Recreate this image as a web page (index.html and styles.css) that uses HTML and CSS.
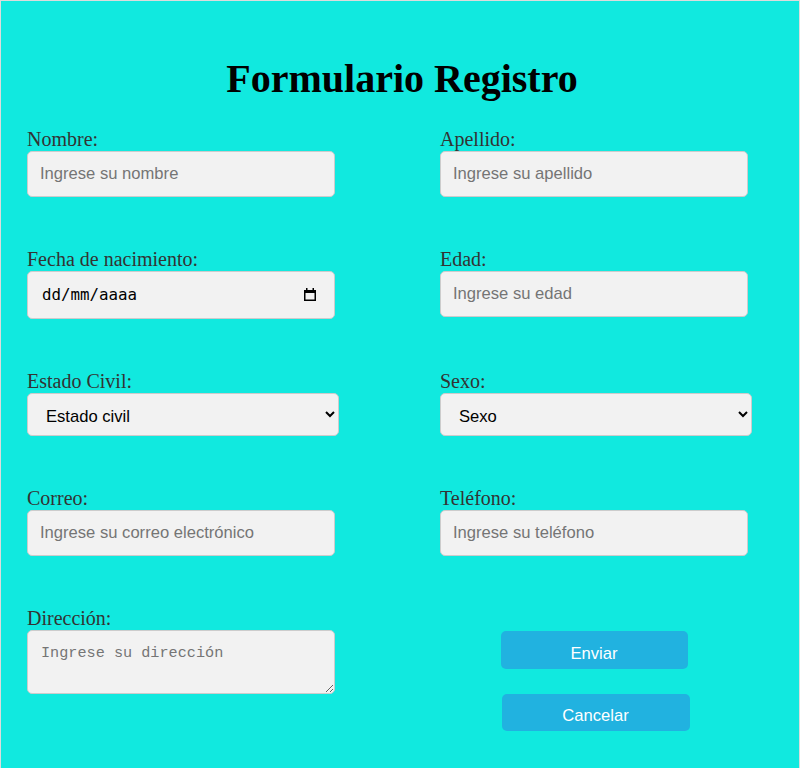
FILE: index.html
```html
<!DOCTYPE html>
<html lang="es">
<head>
<meta charset="utf-8">
<title>Formulario Registro</title>
<link rel="stylesheet" href="styles.css">
</head>
<body>
<div class="page">
  <h1 class="title">Formulario Registro</h1>
  <form class="form">
    <div class="field">
      <label class="label" for="nombre">Nombre:</label>
      <input class="control" id="nombre" type="text" placeholder="Ingrese su nombre">
    </div>
    <div class="field">
      <label class="label" for="apellido">Apellido:</label>
      <input class="control" id="apellido" type="text" placeholder="Ingrese su apellido">
    </div>
    <div class="field">
      <label class="label">Fecha de nacimiento:</label>
      <div class="control date-field">
        <span class="date-text">dd/mm/aaaa</span>
        <svg class="cal-icon" width="14" height="15" viewBox="0 0 14 15" aria-hidden="true">
          <rect x="1.75" y="3.75" width="10.5" height="9.5" fill="none" stroke="#000" stroke-width="1.5"/>
          <rect x="1" y="3" width="12" height="3" fill="#000"/>
          <rect x="3" y="1" width="1.5" height="3" fill="#000"/>
          <rect x="9.5" y="1" width="1.5" height="3" fill="#000"/>
        </svg>
      </div>
    </div>
    <div class="field">
      <label class="label" for="edad">Edad:</label>
      <input class="control" id="edad" type="text" placeholder="Ingrese su edad">
    </div>
    <div class="field">
      <label class="label" for="civil">Estado Civil:</label>
      <select class="select" id="civil">
        <option>Estado civil</option>
      </select>
    </div>
    <div class="field">
      <label class="label" for="sexo">Sexo:</label>
      <select class="select" id="sexo">
        <option>Sexo</option>
      </select>
    </div>
    <div class="field">
      <label class="label" for="correo">Correo:</label>
      <input class="control" id="correo" type="text" placeholder="Ingrese su correo electrónico">
    </div>
    <div class="field">
      <label class="label" for="telefono">Teléfono:</label>
      <input class="control" id="telefono" type="text" placeholder="Ingrese su teléfono">
    </div>
    <div class="field">
      <label class="label" for="direccion">Dirección:</label>
      <textarea class="textarea" id="direccion" placeholder="Ingrese su dirección"></textarea>
    </div>
    <div class="actions">
      <button class="btn btn-send" type="button">Enviar</button>
      <button class="btn btn-cancel" type="button">Cancelar</button>
    </div>
  </form>
</div>
</body>
</html>
```

FILE: styles.css
```css
html, body {
  margin: 0;
  padding: 0;
}

body {
  background: #11e9df;
  font-family: "Liberation Serif", "Times New Roman", serif;
}

.page {
  box-sizing: border-box;
  min-height: 800px;
  background: #11e9df;
  border: 1px solid #dcdcdc;
  border-bottom: none;
  padding: 55px 22px 0 26px;
}

.title {
  margin: 0;
  font-family: "Liberation Serif", "Times New Roman", serif;
  font-size: 40px;
  font-weight: bold;
  line-height: 46px;
  text-align: center;
  color: #000;
}

.form {
  margin-top: 25px;
  display: grid;
  grid-template-columns: 413px 1fr;
  row-gap: 50px;
  align-items: start;
}

.field {
  display: flex;
  flex-direction: column;
  align-items: flex-start;
}

.label {
  display: block;
  font-family: "Liberation Serif", "Times New Roman", serif;
  font-size: 20px;
  line-height: 24px;
  color: #333;
}

.control {
  box-sizing: border-box;
  width: 308px;
  height: 46px;
  margin: 0;
  padding: 0 12px;
  border: 1px solid #cccccc;
  border-radius: 5px;
  background: #f2f2f2;
  font-family: "Liberation Sans", Arial, sans-serif;
  font-size: 16.6px;
  color: #000;
  outline: none;
}

.control::placeholder {
  color: #757575;
}

.date-field {
  height: 47.5px;
  display: flex;
  align-items: center;
  justify-content: space-between;
  padding: 0 17px 0 14px;
}

.date-text {
  font-family: "DejaVu Sans Mono", "Liberation Mono", monospace;
  font-size: 15.8px;
  color: #000;
}

.cal-icon {
  display: block;
}

.select {
  box-sizing: border-box;
  width: 312px;
  height: 43px;
  margin: 0;
  padding: 5px 10px 0 14px;
  border: 1px solid #cccccc;
  border-radius: 5px;
  background-color: #f2f2f2;
  font-family: "Liberation Sans", Arial, sans-serif;
  font-size: 16.6px;
  color: #000;
}

.textarea {
  box-sizing: border-box;
  width: 308px;
  height: 64px;
  margin: 0;
  padding: 14px 12px 0 13px;
  border: 1px solid #cccccc;
  border-radius: 5px;
  background: #f2f2f2;
  font-family: "Liberation Mono", "DejaVu Sans Mono", monospace;
  font-size: 15.2px;
  line-height: 17px;
  color: #000;
  outline: none;
}

.textarea::placeholder {
  color: #757575;
}

.actions {
  width: 308px;
  padding-top: 25px;
  display: flex;
  flex-direction: column;
  align-items: center;
  gap: 25px;
}

.btn {
  box-sizing: border-box;
  border: none;
  border-radius: 5px;
  background: #21b2e0;
  color: #fff;
  font-family: "Liberation Sans", Arial, sans-serif;
  font-size: 16.6px;
  padding: 8px 0 0;
  cursor: pointer;
}

.btn-send {
  width: 187px;
  height: 38px;
}

.btn-cancel {
  width: 188px;
  height: 37px;
  margin-left: 3px;
}
```
